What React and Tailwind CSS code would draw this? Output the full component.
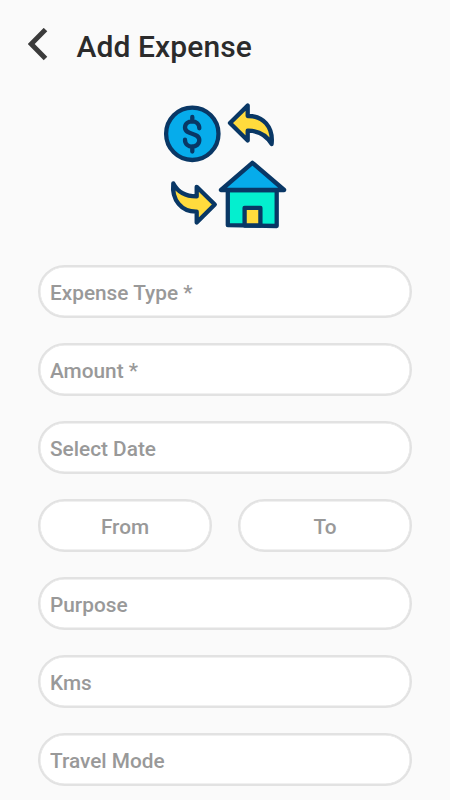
import { useState } from "react"

const FIELD_BASE =
  "h-[53px] w-full min-w-0 rounded-full border-2 border-[#e2e2e2] bg-white pt-0.5 text-[20.8px] font-medium text-[#333] outline-none placeholder:text-[#999] placeholder:opacity-100 shadow-[inset_0_0_0_0.5px_#e2e2e2]"

function Field({ label, value, onChange, centered }) {
  return (
    <input
      type="text"
      aria-label={label}
      placeholder={label}
      value={value}
      onChange={(e) => onChange(e.target.value)}
      className={`${FIELD_BASE} ${centered ? "px-2 text-center" : "px-[10px]"}`}
    />
  )
}

function BackIcon() {
  return (
    <svg width="20" height="33" viewBox="0 0 20 33" fill="none">
      <path d="M17.5 1.6 L3.2 16 L17.5 30.4" stroke="#3b3b3b" strokeWidth="5" />
    </svg>
  )
}

function ExpenseArt() {
  return (
    <svg
      width="130"
      height="132"
      viewBox="160 100 130 132"
      stroke="#093765"
      strokeWidth="4.3"
      strokeLinejoin="round"
      strokeLinecap="round"
    >
      {/* Coin */}
      <circle cx="192.3" cy="133.8" r="26.2" fill="#06aceb" />
      <path
        d="M192.3 117 V121.5 M192.3 146.5 V151.5 M199.3 128.3 C199.3 119.2 185 119.2 185 127.6 C185 135.4 199.3 132 199.3 140.1 C199.3 148.8 185 148.8 185 139.7"
        fill="none"
      />
      {/* Arrows */}
      <path
        d="M230 123 L247.7 105.6 V116 C263 115.5 273.5 127 271.6 144 C266 134.5 258.5 130.5 247.7 130.7 V140.6 Z"
        fill="#ffdb3d"
      />
      <path
        d="M173.3 183.5 C178 192.5 186 196.5 196.7 196.4 V186.8 L214.8 204.5 L196.7 222.5 V211.7 C181.5 212 171.5 200 173.3 183.5 Z"
        fill="#ffdb3d"
      />
      {/* House */}
      <path d="M227.8 190 H276.7 V226 L227.8 225.2 Z" fill="#04efcf" />
      <path d="M252.4 162.8 L221 190 H284.2 Z" fill="#06aceb" />
      <path d="M244.6 225.5 V207.8 H260.4 V225.5 Z" fill="#ffdb3d" />
    </svg>
  )
}

export default function App() {
  const [form, setForm] = useState({
    type: "",
    amount: "",
    date: "",
    from: "",
    to: "",
    purpose: "",
    kms: "",
    mode: "",
  })

  const bind = (key) => ({
    value: form[key],
    onChange: (v) => setForm((prev) => ({ ...prev, [key]: v })),
  })

  return (
    <div className="h-screen overflow-hidden bg-[#fafafa] font-['Roboto',sans-serif]">
      {/* Header */}
      <header className="flex h-[100px] items-start pl-7 pt-7">
        <button type="button" aria-label="Back" className="cursor-pointer">
          <BackIcon />
        </button>
        <h1 className="ml-[28.5px] mt-px text-[30px] font-medium leading-9 tracking-[0.1px] text-[#2b2b2b]">
          Add Expense
        </h1>
      </header>

      <div className="flex justify-center">
        <ExpenseArt />
      </div>

      {/* Form */}
      <form className="mt-[33px] flex flex-col gap-[25px] px-[38px]">
        <Field label="Expense Type *" {...bind("type")} />
        <Field label="Amount *" {...bind("amount")} />
        <Field label="Select Date" {...bind("date")} />
        <div className="flex gap-[26px]">
          <Field label="From" centered {...bind("from")} />
          <Field label="To" centered {...bind("to")} />
        </div>
        <Field label="Purpose" {...bind("purpose")} />
        <Field label="Kms" {...bind("kms")} />
        <Field label="Travel Mode" {...bind("mode")} />
      </form>
    </div>
  )
}
